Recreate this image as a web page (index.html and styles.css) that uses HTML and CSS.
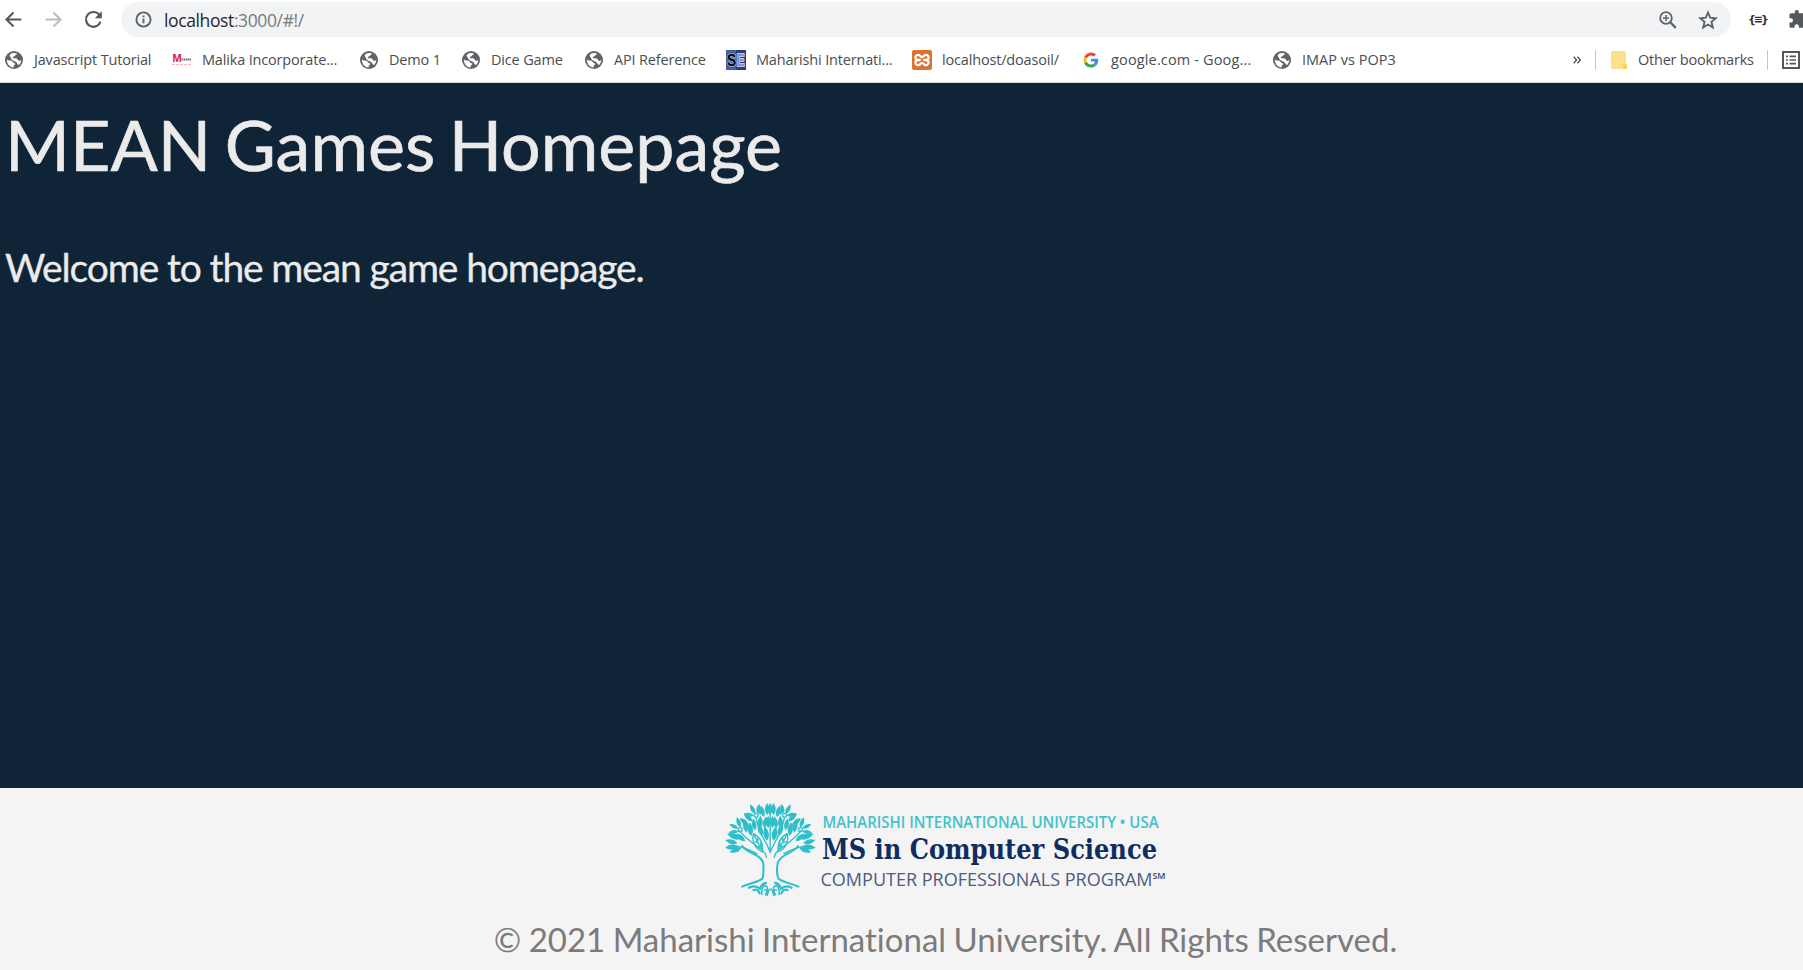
FILE: index.html
```
<!DOCTYPE html>
<html lang="en">
<head>
<meta charset="utf-8">
<title>MEAN Games</title>
<link rel="stylesheet" href="styles.css">
</head>
<body>
<svg class="defs" aria-hidden="true">
  <symbol id="globe" viewBox="0 0 18 18"><circle cx="9" cy="9" r="9" fill="#606367"/><path d="M2 8.500C3.500 10 5 9 6.500 9.700S8 12 9.300 12.200s1.200 1.200.2 1.800-.8 1.400-.9 2.400C4.500 16.300 1.700 13 2 8.500zM6.300 2.600C8 1.700 10.500 1.800 12 2.500c-.3 1.500-1.600 1.300-2 2.300s-2.300.6-2.300 1.800 2.600.3 4 1 1.300 2.300 2.600 2.300 1.200-.9 1.900-1.200c0 2.300-1 4.200-2.500 5.500-.4-1.200-1.500-1-1.800-2.200S10.500 10.600 9 10 6.700 8.500 6.200 7.500 5 6 4.600 4.300z" fill="#fff"/></symbol>
</svg>
<header class="browser">
  <div class="toolbar">
    <svg class="nav" viewBox="0 0 24 24"><path d="M21 12H4M12 4l-8 8 8 8" stroke="#55585c"/></svg>
    <svg class="nav" viewBox="0 0 24 24"><path d="M3 12h17M12 4l8 8-8 8" stroke="#babcbe"/></svg>
    <svg class="nav" viewBox="0 0 24 24"><path d="M20 14.500A8.500 8.500 0 1 1 18.500 6.500" stroke="#55585c"/><path d="M21.500 2.500v8h-8z" fill="#55585c"/></svg>
    <div class="omnibox">
      <svg class="info" viewBox="0 0 18 18"><circle cx="9" cy="9" r="7.500" fill="none" stroke="#5f6368" stroke-width="2"/><path d="M9 8v5M9 4.800v1.900" stroke="#5f6368" stroke-width="2"/></svg>
      <span class="url"><b>localhost</b>:3000/#!/</span>
      <svg class="magnify" viewBox="0 0 18 18"><g fill="none" stroke="#5f6368"><circle cx="7" cy="7" r="5.800" stroke-width="1.800"/><path d="M11 11l5.800 5.800" stroke-width="2.400"/><path d="M4 7h6M7 4v6" stroke-width="1.500"/></g></svg>
      <svg class="star" viewBox="0 0 20 20"><path d="M10 2.500l2.200 5.200 5.600.5-4.300 3.700 1.300 5.500-4.800-2.900-4.800 2.900 1.300-5.500L2.200 8.200l5.600-.5z" fill="none" stroke="#5f6368" stroke-width="1.900"/></svg>
    </div>
    <span class="json">{≡}</span>
    <svg class="puzzle" viewBox="0 0 20 20"><path d="M17.500 9H16V5a1.700 1.700 0 0 0-1.700-1.700h-4V2.100a2.100 2.100 0 0 0-4.200 0v1.200h-4A1.700 1.700 0 0 0 .5 5v3.700H2a2.200 2.200 0 0 1 0 4.500H.5V17a1.700 1.700 0 0 0 1.700 1.700h3.700v-1.500a2.200 2.200 0 0 1 4.500 0v1.500H14A1.700 1.700 0 0 0 16 17v-4h1.500z" fill="#55585c"/></svg>
  </div>
  <nav class="bookmarks">
    <a class="bm w1"><svg class="glb"><use href="#globe"/></svg><span>Javascript Tutorial</span></a>
    <a class="bm w2"><svg class="fav" viewBox="0 0 20 20"><text x="0.500" y="12" class="fm">M</text><path d="M9.500 9.500h10" stroke="#8d6065" stroke-width="2" stroke-dasharray="1.500 .5"/><path d="M0 14.500h20" stroke="#f2b8bd" stroke-dasharray="3 1"/></svg><span>Malika Incorporate...</span></a>
    <a class="bm w3"><svg class="glb"><use href="#globe"/></svg><span>Demo 1</span></a>
    <a class="bm w4"><svg class="glb"><use href="#globe"/></svg><span>Dice Game</span></a>
    <a class="bm w5"><svg class="glb"><use href="#globe"/></svg><span>API Reference</span></a>
    <a class="bm w6"><svg class="fav" viewBox="0 0 20 20"><path d="M0 0h20v20H0z" fill="#4560a3"/><path d="M10 0h10v20H10z" fill="#263d79"/><text x="1" y="16" class="se" textLength="9" lengthAdjust="spacingAndGlyphs">S</text><text x="10.500" y="16" class="se e" textLength="8" lengthAdjust="spacingAndGlyphs">E</text></svg><span>Maharishi Internati...</span></a>
    <a class="bm w7"><svg class="fav" viewBox="0 0 20 20"><rect width="20" height="20" rx="2" fill="#dc7430"/><path d="M7.500 10A2.700 2.700 0 1 1 8.300 6Q10 8.200 11.700 6A2.700 2.700 0 1 1 12.500 10A2.700 2.700 0 1 1 11.700 14Q10 11.800 8.300 14A2.700 2.700 0 1 1 7.500 10z" fill="none" stroke="#fff" stroke-width="2.100"/></svg><span>localhost/doasoil/</span></a>
    <a class="bm w8"><svg class="fav goog" viewBox="0 0 48 48"><path fill="#ea4335" d="M24 9.500c3.500 0 6.700 1.200 9.200 3.600l6.900-6.900A24 24 0 0 0 2.600 13.200l8 6.200C12.400 13.700 17.700 9.500 24 9.500z"/><path fill="#4285f4" d="M47 24.600c0-1.600-.2-3.100-.4-4.600H24v9h12.900c-.6 3-2.200 5.500-4.700 7.200l7.700 6C44.400 38 47 31.800 47 24.600z"/><path fill="#fbbc05" d="M10.500 28.600a14 14 0 0 1 0-9.200l-8-6.200a24 24 0 0 0 0 21.600z"/><path fill="#34a853" d="M24 48c6.500 0 11.900-2.100 15.900-5.800l-7.700-6c-2.200 1.500-4.900 2.300-8.200 2.300-6.300 0-11.600-4.200-13.500-9.900l-8 6.200C6.500 42.600 14.600 48 24 48z"/></svg><span>google.com - Goog...</span></a>
    <a class="bm w9"><svg class="glb"><use href="#globe"/></svg><span>IMAP vs POP3</span></a>
    <div class="more">
      <svg class="chev" viewBox="0 0 8 8"><path d="M.7.700L3.500 4 .7 7.300M4.500.700L7.300 4 4.500 7.300" fill="none" stroke="#44474a" stroke-width="1.300"/></svg>
      <i class="sep"></i>
      <svg class="folder" viewBox="0 0 16 18"><path d="M1.500 0h12A1.500 1.500 0 0 1 15 1.500V18H1.500A1.500 1.500 0 0 1 0 16.500v-15A1.500 1.500 0 0 1 1.500 0z" fill="#fbe28a"/><path d="M12 18v-3.500a1.300 1.300 0 0 1 1.300-1.300H16V18z" fill="#f6d25c"/></svg>
      <span class="other">Other bookmarks</span>
      <i class="sep s2"></i>
      <svg class="list" viewBox="0 0 18 18"><path d="M1 1h16v16H1z" fill="none" stroke="#55585c" stroke-width="2"/><path d="M4 5.300h2M4 9h2M4 12.700h2M7.500 5.300H14M7.500 9H14M7.500 12.700H14" stroke="#55585c" stroke-width="1.700"/></svg>
    </div>
  </nav>
</header>
<main class="page">
  <h1>MEAN Games Homepage</h1>
  <p>Welcome to the mean game homepage.</p>
</main>
<footer class="footer">
  <svg class="logo" viewBox="0 0 450 100">
    <g transform="translate(-9.500 -20) scale(.33333)">
      <g fill="none" stroke="#2fbfcb" stroke-width="6" stroke-linecap="round">
        <path d="M98 198C120 225 148 218 161 247C163 267 163 282 159 296C143 308 122 309 98 320"/>
        <path d="M266 198C245 225 219 218 205 247C201 267 201 282 207 296C223 308 242 309 267 320"/>
        <path d="M90 152C112 180 136 194 158 210Q168 218 171 232M275 152C253 180 229 194 207 210Q197 218 194 232" stroke-width="4"/>
        <path d="M68 196C100 200 119 207 142 221M298 196C265 200 246 207 223 221" stroke-width="4"/>
        <path d="M140 112C145 150 160 172 174 197L182 217L191 197C205 172 218 150 225 112M182 100V207" stroke-width="4"/>
        <path d="M119 323Q137 314 151 326Q158 310 169 309M132 330Q145 325 150 340M246 323Q229 314 215 326Q208 310 197 309M234 330Q221 325 216 340" stroke-width="7"/>
        <path d="M157 343c-2-20 6-29 13-25s4 17-2 26M209 343c2-20-6-29-13-25s-4 17 2 26M173 346q10-38 20 0M165 330q7-3 10 9M201 330q-7-3-10 9" stroke-width="5"/>
        <circle cx="140" cy="106" r="6" stroke-width="4"/><circle cx="225" cy="106" r="6" stroke-width="4"/><circle cx="92" cy="149" r="6" stroke-width="4"/><circle cx="273" cy="149" r="6" stroke-width="4"/>
        <path d="M159 216C135 205 126 183 132 161C151 171 162 188 159 216zM134 166L156 207M137 186l9 1M145 200l9 0M145 174v10M154 187v13" stroke-width="4"/>
        <path d="M206 216C230 205 239 183 233 161C214 171 203 188 206 216zM231 166L209 207M228 186l-9 1M220 200l-9 0M220 174v10M211 187v13" stroke-width="4"/>
      </g>
      <g class="leaves">
        <g id="half">
          <path d="M0 0C-10-12-8-24 0-36 8-24 10-12 0 0z" transform="translate(173 105)"/>
          <path d="M0 0C-10-12-8-24 0-36 8-24 10-12 0 0z" transform="translate(163 111) rotate(-15)"/>
          <path d="M0 0C-10-12-8-24 0-36 8-24 10-12 0 0z" transform="translate(153 105) rotate(-18) scale(.8)"/>
          <path d="M0 0C-10-12-8-24 0-36 8-24 10-12 0 0z" transform="translate(137 102) rotate(-28) scale(.9)"/>
          <path d="M0 0C-10-12-8-24 0-36 8-24 10-12 0 0z" transform="translate(133 107) rotate(-77) scale(.8)"/>
          <path d="M0 0C-10-12-8-24 0-36 8-24 10-12 0 0z" transform="translate(143 100) rotate(14) scale(.8)"/>
          <path d="M0 0C-10-12-8-24 0-36 8-24 10-12 0 0z" transform="translate(129 124) rotate(-47)"/>
          <path d="M0 0C-10-12-8-24 0-36 8-24 10-12 0 0z" transform="translate(118 138) rotate(-48)"/>
          <path d="M0 0C-10-12-8-24 0-36 8-24 10-12 0 0z" transform="translate(111 158) rotate(-8) scale(1.100)"/>
          <path d="M0 0C-10-12-8-24 0-36 8-24 10-12 0 0z" transform="translate(125 168) rotate(-7) scale(1.150)"/>
          <path d="M0 0C-10-12-8-24 0-36 8-24 10-12 0 0z" transform="translate(137 151) rotate(-10)"/>
          <path d="M0 0C-10-12-8-24 0-36 8-24 10-12 0 0z" transform="translate(151 147) rotate(3) scale(1.100)"/>
          <path d="M0 0C-10-12-8-24 0-36 8-24 10-12 0 0z" transform="translate(158 168) rotate(-17) scale(1.100)"/>
          <path d="M0 0C-10-12-8-24 0-36 8-24 10-12 0 0z" transform="translate(164 145) rotate(10)"/>
          <path d="M0 0C-10-12-8-24 0-36 8-24 10-12 0 0z" transform="translate(173 182) rotate(-9) scale(1.200)"/>
          <path d="M0 0C-10-12-8-24 0-36 8-24 10-12 0 0z" transform="translate(176 144)"/>
          <path d="M0 0C-10-12-8-24 0-36 8-24 10-12 0 0z" transform="translate(86 145) rotate(-65) scale(.8)"/>
          <path d="M0 0C-10-12-8-24 0-36 8-24 10-12 0 0z" transform="translate(93 142) rotate(-20) scale(.9)"/>
          <path d="M0 0C-10-12-8-24 0-36 8-24 10-12 0 0z" transform="translate(86 154) rotate(-98) scale(.8)"/>
          <path d="M0 0C-10-12-8-24 0-36 8-24 10-12 0 0z" transform="translate(93 177) rotate(-68) scale(1.200)"/>
          <path d="M0 0C-10-12-8-24 0-36 8-24 10-12 0 0z" transform="translate(107 184) rotate(-50)"/>
          <path d="M0 0C-10-12-8-24 0-36 8-24 10-12 0 0z" transform="translate(84 190) rotate(-75) scale(1.050)"/>
          <path d="M0 0C-10-12-8-24 0-36 8-24 10-12 0 0z" transform="translate(86 199) rotate(-96) scale(1.100)"/>
          <path d="M0 0C-10-12-8-24 0-36 8-24 10-12 0 0z" transform="translate(96 203) rotate(-112) scale(1.050)"/>
        </g>
        <use href="#half" transform="translate(365 0) scale(-1 1)"/>
        <path d="M0 0C-10-12-8-24 0-36 8-24 10-12 0 0z" transform="translate(182 105)"/>
      </g>
    </g>
    <text class="l1" x="103.500" y="27.500" textLength="336" lengthAdjust="spacingAndGlyphs">MAHARISHI INTERNATIONAL UNIVERSITY • USA</text>
    <text class="l2" x="103" y="58.500" textLength="335" lengthAdjust="spacingAndGlyphs">MS in Computer Science</text>
    <text class="l3" x="101.500" y="86" textLength="332" lengthAdjust="spacingAndGlyphs">COMPUTER PROFESSIONALS PROGRAM</text>
    <text class="l4" x="433.500" y="79" textLength="13" lengthAdjust="spacingAndGlyphs">SM</text>
  </svg>
  <p class="copy">© 2021 Maharishi International University. All Rights Reserved.</p>
</footer>
</body>
</html>
```
FILE: styles.css
```
* { box-sizing: border-box; }
body { margin: 0; height: 970px; overflow: hidden; display: flex; flex-direction: column; background: #f4f4f4; font-family: Lato, sans-serif; font-variant-ligatures: none; }
.defs { position: absolute; width: 0; height: 0; }
.browser { height: 83px; flex: none; background: #fff; border-bottom: 1px solid #dcdfe2; font-family: "Open Sans", sans-serif; color: #4a4d51; overflow: hidden; }
.toolbar { height: 38px; display: flex; align-items: center; padding-left: 3px; width: 1830px; }
.nav { width: 21px; height: 21px; margin-right: 19px; flex: none; fill: none; stroke-width: 2.4; }
.omnibox { height: 35px; width: 1610px; margin: 1px 0 0 -2px; border-radius: 18px; background: #f1f3f4; display: flex; align-items: center; padding: 0 13px 0 14px; flex: none; }
.info { width: 17px; height: 17px; margin-right: 12px; }
.url { font-size: 17.5px; letter-spacing: -.38px; color: #777b7f; flex: 1; }
.url b { font-weight: 400; color: #27282b; }
.magnify { width: 18px; height: 18px; margin-right: 21px; }
.star { width: 20px; height: 20px; }
.json { font: bold 11px "DejaVu Sans", sans-serif; letter-spacing: -2px; color: #333; margin-left: 17px; width: 41px; }
.puzzle { width: 19px; height: 19px; flex: none; }
.bookmarks { height: 42px; display: flex; align-items: center; padding-left: 4px; gap: 20px; white-space: nowrap; margin-top: 1px; }
.bm { display: flex; align-items: center; gap: 10px; flex: none; font-size: 14.5px; letter-spacing: -.17px; }
.bm span, .other { padding-bottom: 2px; }
.glb { width: 18px; height: 18px; margin: 0 1px; }
.fav { width: 20px; height: 20px; overflow: visible; }
.goog { padding: 2.5px; }
.w1 { width: 148px; } .w2 { width: 167px; } .w3 { width: 82px; } .w4 { width: 103px; } .w5 { width: 122px; }
.w6 { width: 166px; } .w7 { width: 149px; } .w8 { width: 171px; letter-spacing: .15px; } .w9 { width: 125px; letter-spacing: 0; }
.fm { font: bold 11px "Liberation Sans", sans-serif; fill: #d3232e; }
.se { font: bold 17px "Liberation Sans", sans-serif; fill: #000; stroke: #9eaed4; stroke-width: 1.6px; paint-order: stroke; }
.e { fill: #7890c4; stroke: #dde4f4; }
.more { display: flex; align-items: center; margin-left: 156px; flex: none; }
.chev { width: 8px; height: 8px; }
.sep { width: 1px; height: 20px; background: #c6c8ca; margin: 0 15px 0 14px; }
.folder { width: 16px; height: 18px; margin-right: 11px; }
.other { font-size: 14.5px; letter-spacing: -.22px; width: 116px; }
.s2 { margin: 0 14px 0 13px; }
.list { width: 18px; height: 18px; }
.page { height: 705px; flex: none; background: #102437; color: #ebebeb; padding: 19px 5px; }
h1 { font-size: 70px; font-weight: 400; line-height: 84px; margin: 0; word-spacing: -4.5px; -webkit-text-stroke: .6px #ebebeb; }
.page p { font-size: 39px; line-height: 48px; margin: 57px 0 0; letter-spacing: -1.13px; -webkit-text-stroke: .3px #ebebeb; }
.footer { height: 182px; display: flex; flex-direction: column; align-items: center; padding-left: 88px; }
.logo { width: 450px; height: 100px; margin: 12px 3px 0 0; flex: none; }
.leaves { fill: #2fbfcb; }
.l1 { font: 600 15.5px "Open Sans", sans-serif; fill: #42c2ca; }
.l2 { font: bold 27.5px "DejaVu Serif", serif; font-stretch: condensed; fill: #112d60; }
.l3 { font: 17.8px "Open Sans", sans-serif; fill: #4c5c82; }
.l4 { font: 600 9px "Open Sans", sans-serif; fill: #33466f; }
.copy { margin: 17px 0 0; font-size: 33px; line-height: 44px; color: #7b7b7b; white-space: nowrap; word-spacing: -1px; }
```
